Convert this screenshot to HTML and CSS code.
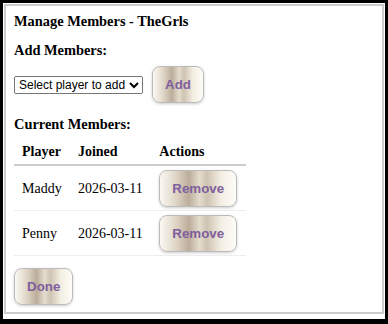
FILE: index.html
```html
<!DOCTYPE html>
<html lang="en">

<head>
    <meta charset="UTF-8">
    <meta name="viewport" content="width=device-width, initial-scale=1.0">
    <title>Manage Members</title>
    <link rel="stylesheet" href="styles.css">
</head>

<body>
    <div class="frame">
        <div class="manage-box">
            <div class="manage-title">Manage Members - TheGrls</div>
            <div class="section-title">Add Members:</div>
            <div class="add-row">
                <select class="player-select">
                    <option>Select player to add</option>
                    <option>Maddy</option>
                    <option>Penny</option>
                </select>
                <button class="fancy-btn">Add</button>
            </div>
            <div class="section-title">Current Members:</div>
            <table class="members-table">
                <thead>
                    <tr>
                        <th>Player</th>
                        <th>Joined</th>
                        <th>Actions</th>
                    </tr>
                </thead>
                <tbody>
                    <tr>
                        <td>Maddy</td>
                        <td>2026-03-11</td>
                        <td><button class="fancy-btn">Remove</button></td>
                    </tr>
                    <tr>
                        <td>Penny</td>
                        <td>2026-03-11</td>
                        <td><button class="fancy-btn">Remove</button></td>
                    </tr>
                </tbody>
            </table>
            <div class="done-row"><button class="fancy-btn">Done</button></div>
        </div>
    </div>
</body>

</html>
```

FILE: styles.css
```css
html {
    background: #000000;
}

body {
    margin: 0px;
    padding: 3px 3px 5px 3px;
    background: #000000;
}

.frame {
    background: #ffffff;
    padding: 1px 1px 5px 1px;
}

.manage-box {
    border: 2px solid #cccccc;
    padding: 8px;
    height: 310px;
    box-sizing: border-box;
    font-family: "Liberation Serif", "Times New Roman", serif;
    color: #000000;
}

.manage-title {
    font-size: 14.4px;
    font-weight: bold;
    margin: -1px 0px 12px 0px;
}

.section-title {
    font-size: 14.4px;
    font-weight: bold;
    margin: 0px 0px 7px 0px;
}

.add-row {
    display: flex;
    align-items: center;
    gap: 9px;
    margin-bottom: 13px;
}

.player-select {
    font-family: "Liberation Sans", Arial, sans-serif;
    font-size: 12px;
    padding: 0px;
}

.members-table {
    border-collapse: collapse;
    font-size: 14px;
    width: 232px;
}

.members-table th,
.members-table td {
    padding: 4px 7.5px 4px 8px;
    text-align: left;
    vertical-align: middle;
}

.members-table th {
    border-bottom: 2px solid #cccccc;
}

.members-table td {
    padding-bottom: 3px;
    border-bottom: 1px solid #eeeeee;
}

.done-row {
    margin-top: 12px;
}

.fancy-btn {
    font-family: "Liberation Sans", Arial, sans-serif;
    font-size: 13.333px;
    font-weight: bold;
    color: #7f5f9d;
    padding: 10px 12px;
    border: 1px solid #bbbbbb;
    border-radius: 8px;
    background: linear-gradient(90deg, #fbf9f2 0%, #ddd3c4 22%, #bcad9b 38%, #e4dccd 52%, #cfc3b2 62%, #f3eee3 80%, #fdfcf7 100%);
    box-shadow: 0px 1px 3px rgba(0, 0, 0, 0.2);
    cursor: pointer;
}
```
